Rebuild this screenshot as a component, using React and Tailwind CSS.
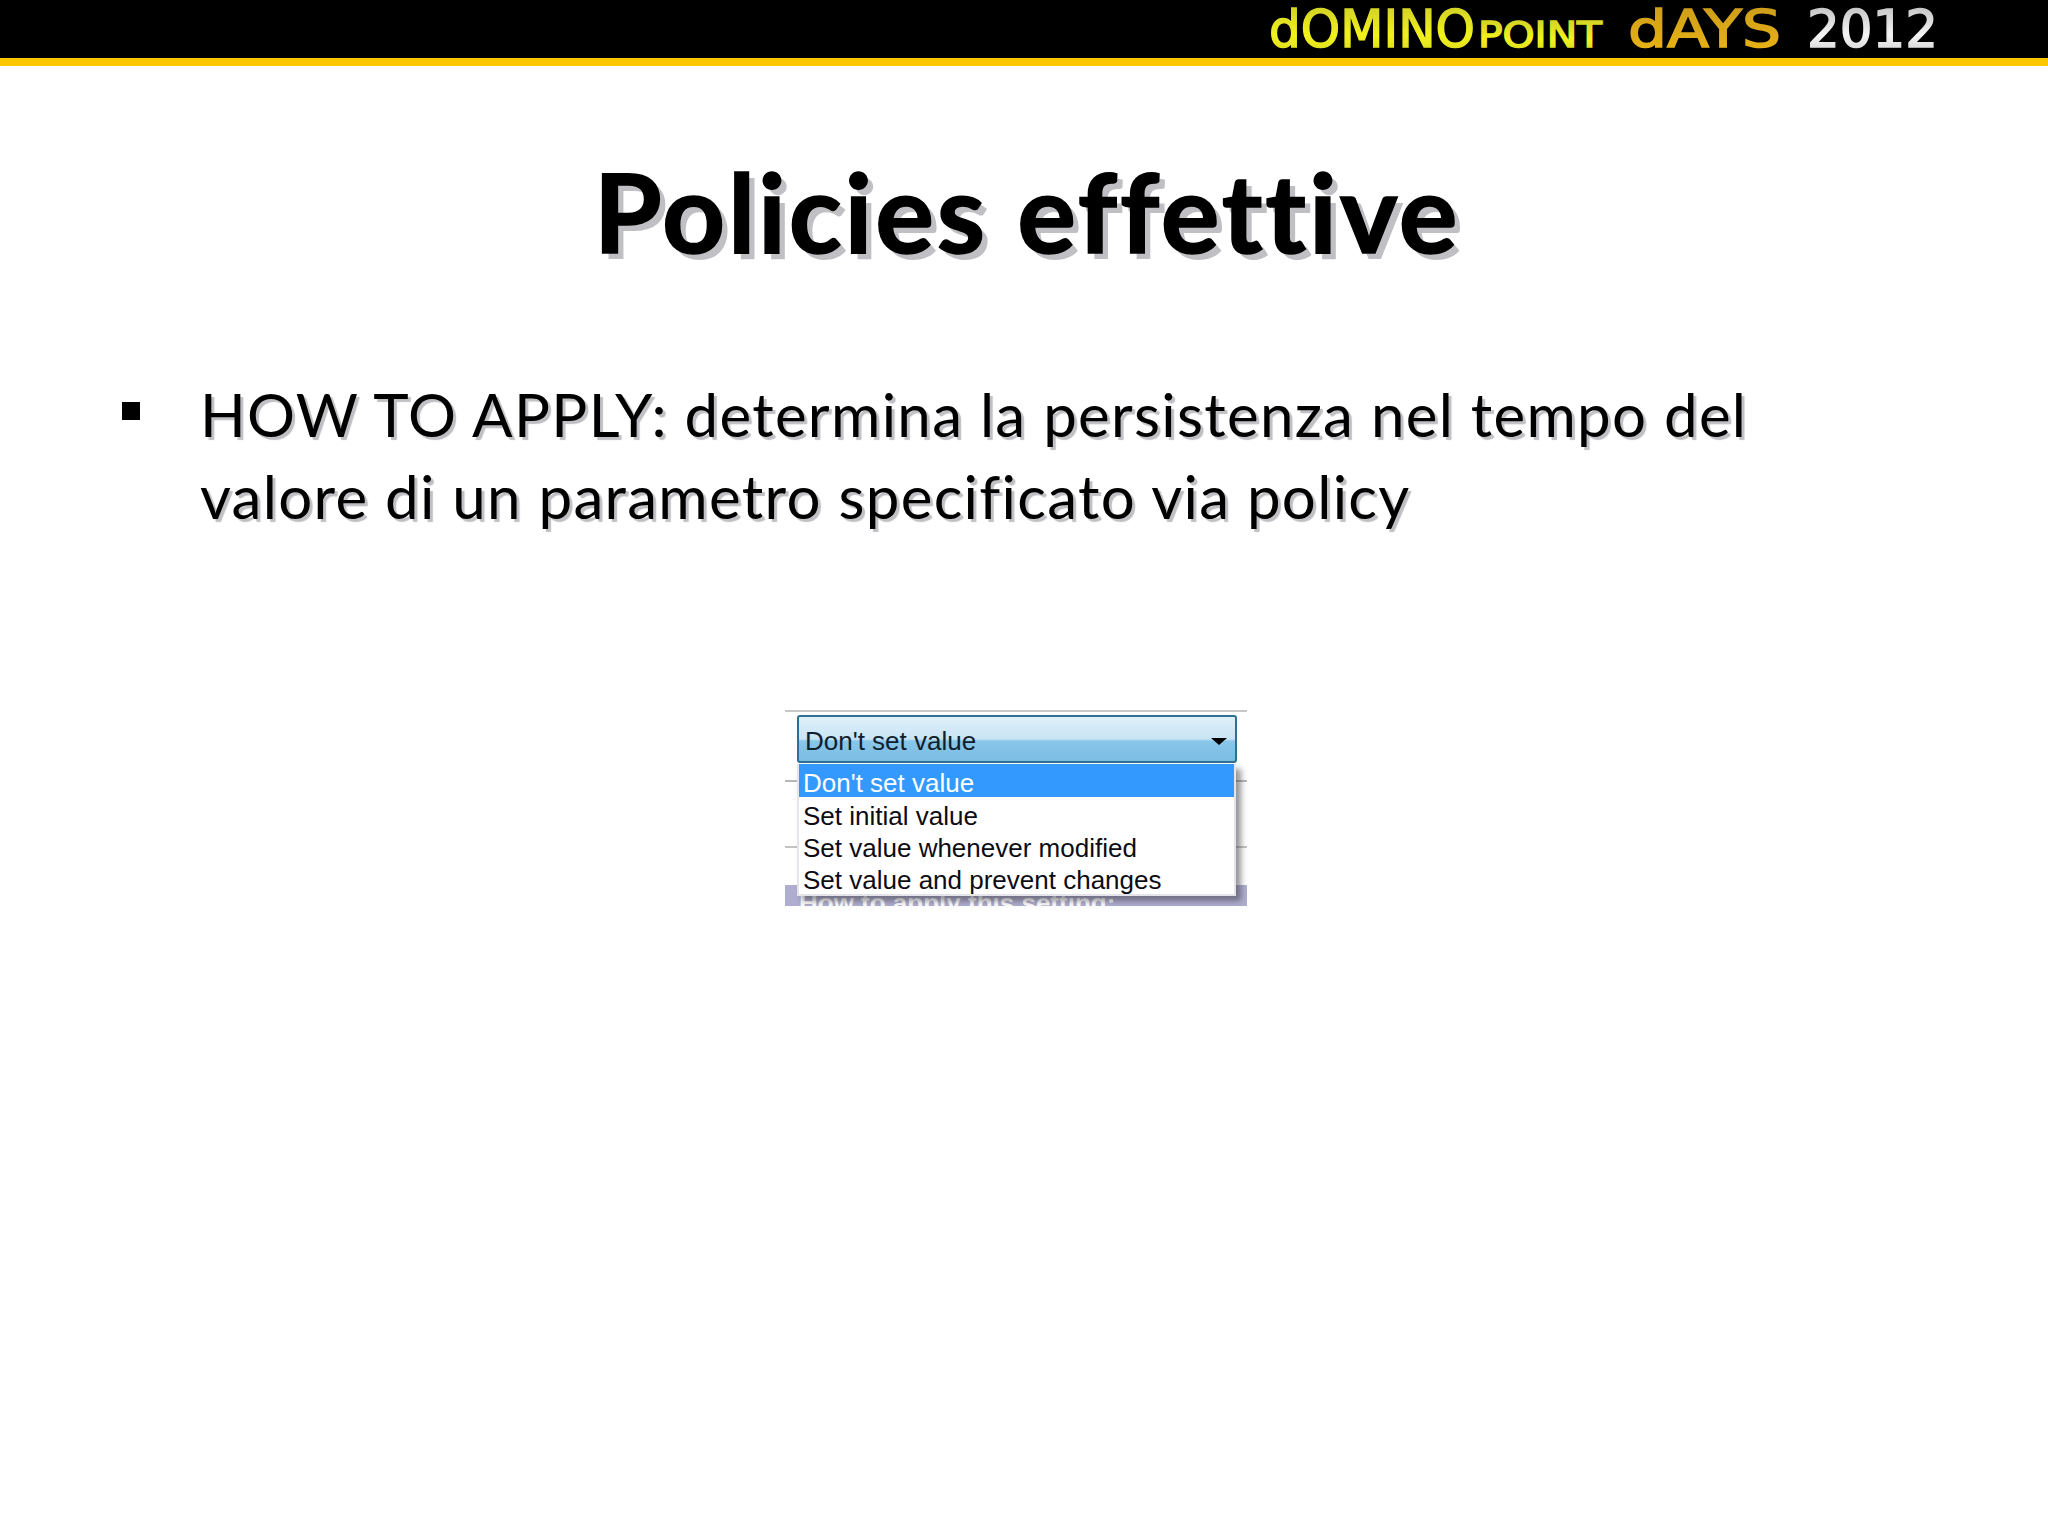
const MENU_ITEMS = ['Set initial value', 'Set value whenever modified', 'Set value and prevent changes']

function Logo() {
  return (
    <svg width="680" height="58" viewBox="0 0 680 58" className="block">
      <defs>
        <linearGradient id="yellowFill" x1="0" y1="0" x2="0" y2="1">
          <stop offset="0" stopColor="#c9c92a" />
          <stop offset="0.6" stopColor="#f2f21c" />
          <stop offset="1" stopColor="#d6d620" />
        </linearGradient>
        <linearGradient id="amberFill" x1="0" y1="0" x2="0" y2="1">
          <stop offset="0" stopColor="#c99a1c" />
          <stop offset="1" stopColor="#edb712" />
        </linearGradient>
        <linearGradient id="whiteFill" x1="0" y1="0" x2="0" y2="1">
          <stop offset="0" stopColor="#b8b8b8" />
          <stop offset="0.6" stopColor="#f4f4f4" />
          <stop offset="1" stopColor="#c8c8c8" />
        </linearGradient>
      </defs>
      <g fontFamily="'DejaVu Sans', sans-serif" fontSize="52" strokeWidth="1.5">
        <text x="9" y="47" fill="url(#yellowFill)" stroke="url(#yellowFill)" textLength="206" lengthAdjust="spacingAndGlyphs">dOMINO</text>
        <text x="218" y="47" fontSize="36" fill="url(#yellowFill)" stroke="url(#yellowFill)" textLength="124" lengthAdjust="spacingAndGlyphs">POINT</text>
        <text x="368" y="47" fill="url(#amberFill)" stroke="url(#amberFill)" textLength="153" lengthAdjust="spacingAndGlyphs">dAYS</text>
        <text x="547" y="47" fill="url(#whiteFill)" stroke="url(#whiteFill)" textLength="131" lengthAdjust="spacingAndGlyphs">2012</text>
      </g>
    </svg>
  )
}

function PolicyDropdown() {
  return (
    <div className="relative w-[462px] h-[196px] font-['Liberation_Sans',sans-serif] text-[26px] leading-[32px]">
      {/* pannello dietro il menu */}
      <div className="h-[175px] border-t-2 border-[#c8c8c8] pt-[3px]">
        <div className="ml-[12px] w-[440px] h-[48px] flex items-center justify-between pt-[4px] pl-[6px] pr-[8px] rounded-[3px] border-2 border-[#2f6f94] bg-[linear-gradient(#dff0fa_0%,#c8e4f5_50%,#88c6ea_55%,#7dbde3_100%)] text-[#10202c]">
          <span>Don't set value</span>
          <span className="w-0 h-0 border-x-[8px] border-t-[7px] border-x-transparent border-t-black" />
        </div>
        <div className="mt-[17px] h-[2px] bg-[#b8b8b8]" />
        <div className="mt-[64px] h-[2px] bg-[#c4c4c4]" />
      </div>
      <div className="h-[21px] bg-[#b0aed0] text-white pl-[14px] overflow-hidden font-bold leading-[36px]">How to apply this setting:</div>
      <div className="absolute left-[12px] top-[54px] w-[439px] h-[132px] bg-white border-x-2 border-b-2 border-[#e4e4ea] shadow-[5px_5px_6px_rgba(60,60,70,0.55)] text-[#0c0c14] leading-[39px]">
        <div className="h-[33px] bg-[#3399ff] text-white pl-[4px]">Don't set value</div>
        {MENU_ITEMS.map(item => (
          <div key={item} className="h-[32px] pl-[4px]">{item}</div>
        ))}
      </div>
    </div>
  )
}

export default function App() {
  return (
    <div className="w-[2048px] h-[1536px] bg-white text-black font-['Lato',sans-serif] overflow-hidden [font-variant-ligatures:none]">
      <header className="h-[66px] bg-black border-b-[8px] border-[#fdc800] flex justify-end pr-[108px]">
        <Logo />
      </header>

      <h1 className="mt-[79px] pl-[6px] text-center text-[110px] leading-[130px] font-bold tracking-[2.75px] [-webkit-text-stroke:1.5px_black] [text-shadow:6px_6px_0_#c0c0c4]">
        Policies effettive
      </h1>

      <div className="mt-[98px] pl-[122px] flex">
        <div className="w-[18px] h-[18px] mt-[29px] bg-black" />
        <p className="ml-[60px] w-[1640px] text-[60px] leading-[82px] tracking-[1.3px] [text-shadow:3px_3px_1px_#c0c0c4]">
          HOW TO APPLY: determina la persistenza nel tempo del valore di un parametro specificato via policy
        </p>
      </div>

      <div className="mt-[173px] ml-[785px]">
        <PolicyDropdown />
      </div>
    </div>
  )
}
